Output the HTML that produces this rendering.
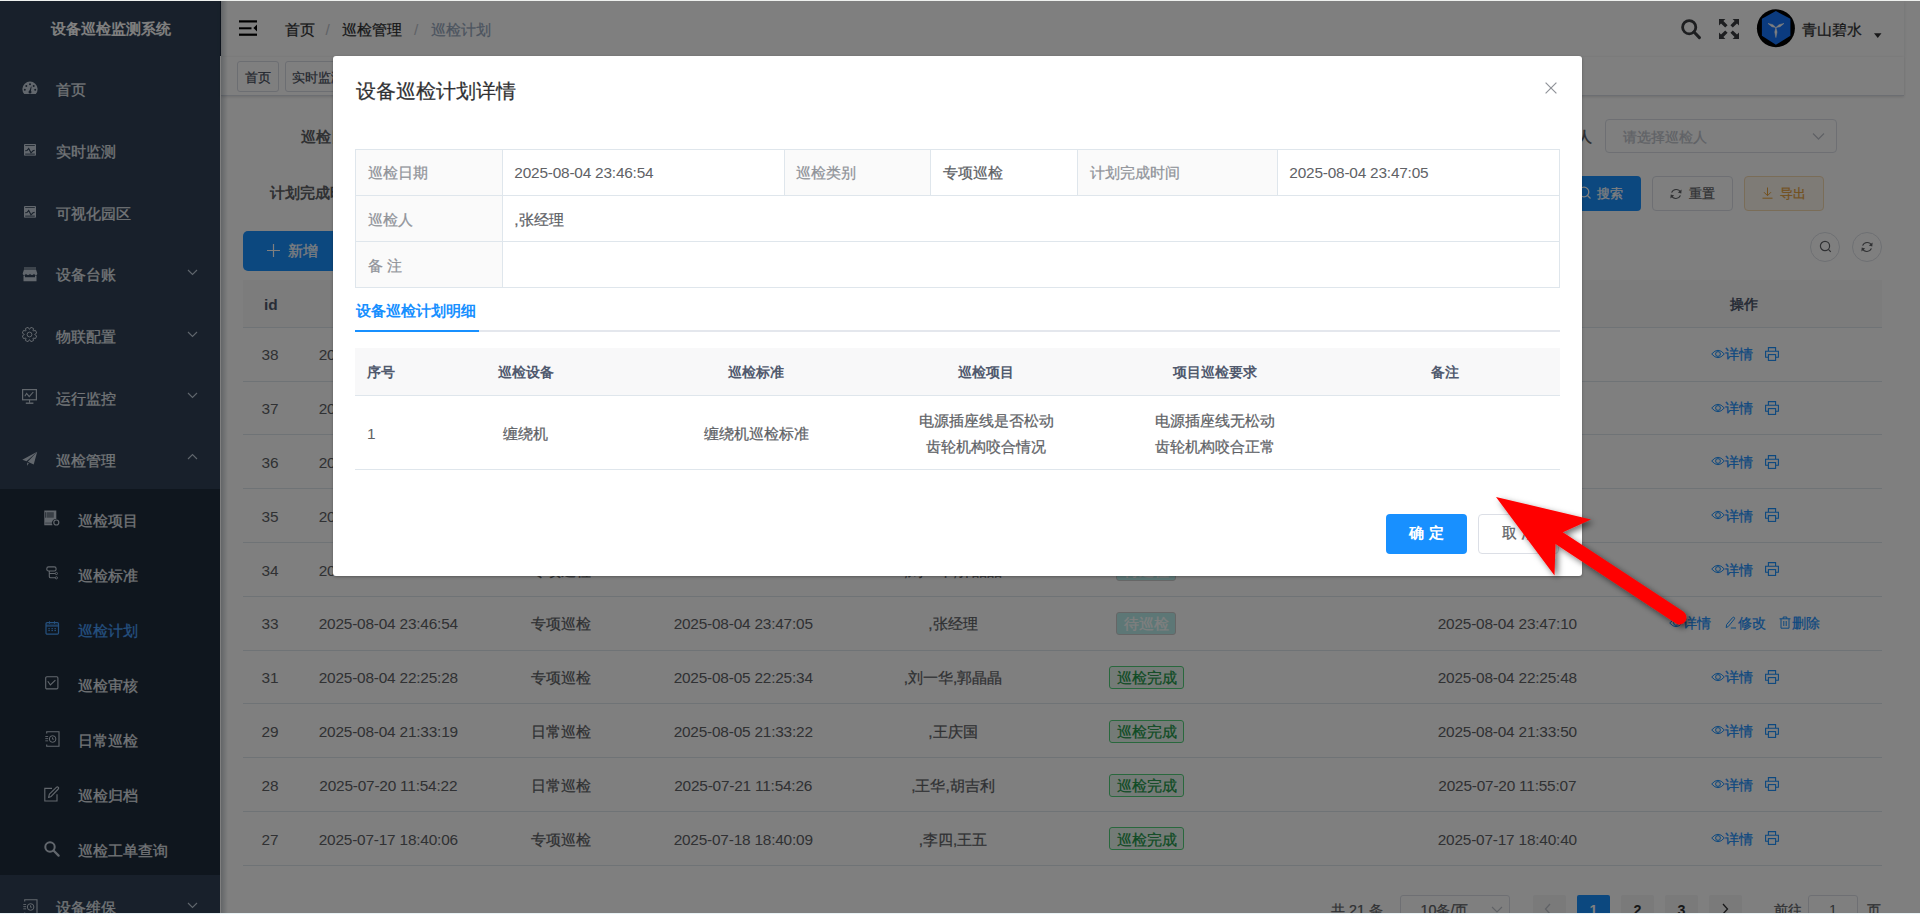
<!DOCTYPE html>
<html><head><meta charset="utf-8"><style>
*{box-sizing:border-box;margin:0;padding:0}
html,body{width:1920px;height:914px;overflow:hidden;background:#fff}
body{position:relative;font-family:"Liberation Sans",sans-serif;color:#606266;font-size:15.4px}
.a{position:absolute;white-space:nowrap}
</style></head><body>
<div class="a" style="left:0px;top:1px;width:221px;height:912px;background:#304156"></div>
<div class="a" style="left:220px;top:1px;width:1px;height:55px;background:#1a2638"></div>
<div class="a" style="left:0px;top:488.5px;width:220px;height:386.5px;background:#1f2d3d"></div>
<div class="a" style="left:0.50px;width:220px;text-align:center;top:17.25px;font-size:15.4px;line-height:24px;color:#fff;font-weight:bold;">设备巡检监测系统</div>
<div class="a " style="left:55.50px;top:77.95px;font-size:15.4px;line-height:24px;color:#e6ebf0;font-weight:normal;-webkit-text-stroke:0.25px currentColor;">首页</div>
<div class="a " style="left:55.50px;top:139.78px;font-size:15.4px;line-height:24px;color:#e6ebf0;font-weight:normal;-webkit-text-stroke:0.25px currentColor;">实时监测</div>
<div class="a " style="left:55.50px;top:201.61px;font-size:15.4px;line-height:24px;color:#e6ebf0;font-weight:normal;-webkit-text-stroke:0.25px currentColor;">可视化园区</div>
<div class="a " style="left:55.50px;top:263.44px;font-size:15.4px;line-height:24px;color:#e6ebf0;font-weight:normal;-webkit-text-stroke:0.25px currentColor;">设备台账</div>
<div class="a " style="left:55.50px;top:325.27px;font-size:15.4px;line-height:24px;color:#e6ebf0;font-weight:normal;-webkit-text-stroke:0.25px currentColor;">物联配置</div>
<div class="a " style="left:55.50px;top:387.10px;font-size:15.4px;line-height:24px;color:#e6ebf0;font-weight:normal;-webkit-text-stroke:0.25px currentColor;">运行监控</div>
<div class="a " style="left:55.50px;top:448.93px;font-size:15.4px;line-height:24px;color:#e6ebf0;font-weight:normal;-webkit-text-stroke:0.25px currentColor;">巡检管理</div>
<svg class="a" style="left:186.5px;top:268.69px;" width="11" height="7" viewBox="0 0 11 7"><polyline points="1,1 5.5,5.5 10,1" fill="none" stroke="#bfcbd9" stroke-width="1.1"/></svg>
<svg class="a" style="left:186.5px;top:330.52px;" width="11" height="7" viewBox="0 0 11 7"><polyline points="1,1 5.5,5.5 10,1" fill="none" stroke="#bfcbd9" stroke-width="1.1"/></svg>
<svg class="a" style="left:186.5px;top:392.34999999999997px;" width="11" height="7" viewBox="0 0 11 7"><polyline points="1,1 5.5,5.5 10,1" fill="none" stroke="#bfcbd9" stroke-width="1.1"/></svg>
<svg class="a" style="left:186.5px;top:453.18px;" width="11" height="7" viewBox="0 0 11 7"><polyline points="1,6 5.5,1.5 10,6" fill="none" stroke="#bfcbd9" stroke-width="1.1"/></svg>
<div class="a " style="left:55.50px;top:896.25px;font-size:15.4px;line-height:24px;color:#e6ebf0;font-weight:normal;-webkit-text-stroke:0.25px currentColor;">设备维保</div>
<svg class="a" style="left:186.5px;top:902px;" width="11" height="7" viewBox="0 0 11 7"><polyline points="1,1 5.5,5.5 10,1" fill="none" stroke="#bfcbd9" stroke-width="1.1"/></svg>
<div class="a " style="left:77.50px;top:508.65px;font-size:15.4px;line-height:24px;color:#e6ebf0;font-weight:normal;-webkit-text-stroke:0.25px currentColor;">巡检项目</div>
<div class="a " style="left:77.50px;top:563.65px;font-size:15.4px;line-height:24px;color:#e6ebf0;font-weight:normal;-webkit-text-stroke:0.25px currentColor;">巡检标准</div>
<div class="a " style="left:77.50px;top:618.65px;font-size:15.4px;line-height:24px;color:#4ba3ff;font-weight:normal;-webkit-text-stroke:0.25px currentColor;">巡检计划</div>
<div class="a " style="left:77.50px;top:673.65px;font-size:15.4px;line-height:24px;color:#e6ebf0;font-weight:normal;-webkit-text-stroke:0.25px currentColor;">巡检审核</div>
<div class="a " style="left:77.50px;top:728.65px;font-size:15.4px;line-height:24px;color:#e6ebf0;font-weight:normal;-webkit-text-stroke:0.25px currentColor;">日常巡检</div>
<div class="a " style="left:77.50px;top:783.65px;font-size:15.4px;line-height:24px;color:#e6ebf0;font-weight:normal;-webkit-text-stroke:0.25px currentColor;">巡检归档</div>
<div class="a " style="left:77.50px;top:838.65px;font-size:15.4px;line-height:24px;color:#e6ebf0;font-weight:normal;-webkit-text-stroke:0.25px currentColor;">巡检工单查询</div>
<svg class="a" style="left:22px;top:81px;" width="16" height="14" viewBox="0 0 16 14"><path d="M2.2,13.1 A7.6,7.6 0 1 1 13.8,13.1 Z" fill="#c5cfdb"/><circle cx="8" cy="3.3" r="1" fill="#304156"/><circle cx="4.3" cy="5" r="1" fill="#304156"/><circle cx="11.7" cy="5" r="1" fill="#304156"/><circle cx="2.8" cy="8.8" r="1" fill="#304156"/><circle cx="13.2" cy="8.8" r="1" fill="#304156"/><path d="M7.2,10.5 L9,5.5 L9.6,5.7 L8.8,10.8 Z" fill="#304156"/><circle cx="8" cy="11" r="1.5" fill="#304156"/></svg>
<svg class="a" style="left:24px;top:144px;" width="12" height="12" viewBox="0 0 12 12"><rect x="0" y="0" width="12" height="11.7" rx="1" fill="#c5cfdb"/><rect x="1.2" y="1.2" width="9.6" height="0.8" fill="#304156"/><polyline points="1.2,6.8 3,6.6 4.7,4.5 7,8.8 9,6.8 10.6,6.4" fill="none" stroke="#304156" stroke-width="1.1"/><rect x="1.2" y="9.3" width="9.6" height="2" fill="#304156" opacity=".55"/></svg>
<svg class="a" style="left:24px;top:206px;" width="12" height="12" viewBox="0 0 12 12"><rect x="0" y="0" width="12" height="11.7" rx="1" fill="#c5cfdb"/><rect x="1.2" y="1.2" width="9.6" height="0.8" fill="#304156"/><polyline points="1.2,6.8 3,6.6 4.7,4.5 7,8.8 9,6.8 10.6,6.4" fill="none" stroke="#304156" stroke-width="1.1"/><rect x="1.2" y="9.3" width="9.6" height="2" fill="#304156" opacity=".55"/></svg>
<svg class="a" style="left:22px;top:266.5px;" width="16" height="15" viewBox="0 0 16 15"><rect x="2" y="0.5" width="12" height="1" fill="#c5cfdb"/><path d="M2,2.5 H14 L15.3,6.5 Q15.3,8 14,8 Q12.5,8 12,6.8 Q11.3,8 10,8 Q8.6,8 8,6.8 Q7.4,8 6,8 Q4.7,8 4,6.8 Q3.4,8 2,8 Q0.7,8 0.7,6.5 Z" fill="#c5cfdb"/><path d="M1.5,8.5 H3 V10.2 H13 V8.5 H14.5 V14.2 H1.5 Z" fill="#c5cfdb"/></svg>
<svg class="a" style="left:22px;top:327px;" width="15" height="15" viewBox="0 0 15 15"><polygon points="14.66,8.90 13.55,11.58 11.30,11.05 11.05,11.30 11.58,13.55 8.90,14.66 7.67,12.70 7.33,12.70 6.10,14.66 3.42,13.55 3.95,11.30 3.70,11.05 1.45,11.58 0.34,8.90 2.30,7.67 2.30,7.33 0.34,6.10 1.45,3.42 3.70,3.95 3.95,3.70 3.42,1.45 6.10,0.34 7.33,2.30 7.67,2.30 8.90,0.34 11.58,1.45 11.05,3.70 11.30,3.95 13.55,3.42 14.66,6.10 12.70,7.33 12.70,7.67" fill="none" stroke="#c5cfdb" stroke-width="1" stroke-linejoin="round"/><circle cx="7.5" cy="7.5" r="2.4" fill="none" stroke="#c5cfdb" stroke-width="1"/></svg>
<svg class="a" style="left:22px;top:388.5px;" width="15" height="16" viewBox="0 0 15 16"><rect x="0.6" y="0.6" width="13.8" height="10.2" fill="none" stroke="#c5cfdb" stroke-width="1.2"/><polyline points="2.8,7.2 4.6,4.5 7.2,7.7 11.3,3" fill="none" stroke="#c5cfdb" stroke-width="1.1"/><rect x="7" y="10.8" width="1.1" height="3" fill="#c5cfdb"/><rect x="3.8" y="13.5" width="7.6" height="1.4" fill="#c5cfdb"/></svg>
<svg class="a" style="left:22px;top:450.5px;" width="16" height="16" viewBox="0 0 16 16"><path d="M15.2,0.8 L0.3,8.7 L4.5,10.3 Z" fill="#c5cfdb"/><path d="M15.2,0.8 L5.8,10.7 L11.7,13.5 Z" fill="#c5cfdb"/><path d="M5.2,11.5 L6.8,12.3 L5.1,14.7 Z" fill="#c5cfdb"/></svg>
<svg class="a" style="left:23px;top:898.5px;" width="15" height="16" viewBox="0 0 15 16"><path d="M1.7,2.5 V0.7 H14 V15.3 H1.7 V13.5" fill="none" stroke="#c5cfdb" stroke-width="1.1"/><rect x="0.3" y="5" width="2.8" height="0.9" fill="#c5cfdb"/><rect x="0.3" y="7.2" width="2.8" height="0.9" fill="#c5cfdb"/><rect x="0.3" y="9.4" width="2.8" height="0.9" fill="#c5cfdb"/><circle cx="7.6" cy="8" r="3.3" fill="none" stroke="#c5cfdb" stroke-width="1"/><path d="M7.5,6.3 V8.2 H8.9" fill="none" stroke="#c5cfdb" stroke-width=".9"/></svg>
<svg class="a" style="left:44px;top:509.5px;" width="16" height="16" viewBox="0 0 16 16"><path d="M0.3,0.4 H12.3 V9 A4,4 0 0 0 8.5,15.2 H0.3 Z" fill="#c5cfdb"/><rect x="2.9" y="2.2" width="6.9" height="5.5" fill="#1f2d3d" opacity=".5"/><rect x="1.4" y="2.2" width="0.8" height="5.5" fill="#1f2d3d"/><rect x="1.2" y="12.5" width="7" height="1.2" fill="#1f2d3d" opacity=".4"/><circle cx="12.3" cy="12.5" r="2.5" fill="none" stroke="#c5cfdb" stroke-width="1.2"/></svg>
<svg class="a" style="left:46px;top:565.5px;" width="12" height="14" viewBox="0 0 12 14"><rect x="0.8" y="0.9" width="9.3" height="4.1" rx="1.8" fill="none" stroke="#c5cfdb" stroke-width="1.1"/><path d="M3.3,5 V10.5 Q3.3,11.8 4.6,11.8 H9.3 M3.3,7.5 H9.3" fill="none" stroke="#c5cfdb" stroke-width="1.1"/><circle cx="10.4" cy="7.5" r="1.1" fill="none" stroke="#c5cfdb" stroke-width=".9"/><circle cx="10.4" cy="11.8" r="1.1" fill="none" stroke="#c5cfdb" stroke-width=".9"/></svg>
<svg class="a" style="left:44.5px;top:621px;" width="15" height="14" viewBox="0 0 15 14"><rect x="1" y="1.6" width="12.5" height="11.5" rx="1.2" fill="none" stroke="#4ba3ff" stroke-width="1.2"/><rect x="1" y="3.5" width="12.5" height="2.3" fill="#4ba3ff" opacity=".7"/><rect x="4" y="0.3" width="1" height="2.5" fill="#4ba3ff"/><rect x="9" y="0.3" width="1" height="2.5" fill="#4ba3ff"/><g fill="#4ba3ff"><rect x="3.3" y="7.2" width="1.6" height="1"/><rect x="6.4" y="7.2" width="1.6" height="1"/><rect x="9.4" y="7.2" width="1.6" height="1"/><rect x="3.3" y="9.1" width="1.6" height="1"/><rect x="6.4" y="9.1" width="1.6" height="1"/><rect x="9.4" y="9.1" width="1.6" height="1"/></g></svg>
<svg class="a" style="left:45px;top:676px;" width="14" height="14" viewBox="0 0 14 14"><rect x="0.7" y="0.7" width="12.2" height="12.2" rx="1.2" fill="none" stroke="#c5cfdb" stroke-width="1.1"/><polyline points="2.8,5.3 5.4,9 10.4,4.2" fill="none" stroke="#c5cfdb" stroke-width="1.1"/></svg>
<svg class="a" style="left:44.5px;top:730.5px;" width="15" height="16" viewBox="0 0 15 16"><path d="M1.7,2.5 V0.7 H14 V15.3 H1.7 V13.5" fill="none" stroke="#c5cfdb" stroke-width="1.1"/><rect x="0.3" y="5" width="2.8" height="0.9" fill="#c5cfdb"/><rect x="0.3" y="7.2" width="2.8" height="0.9" fill="#c5cfdb"/><rect x="0.3" y="9.4" width="2.8" height="0.9" fill="#c5cfdb"/><circle cx="7.6" cy="8" r="3.3" fill="none" stroke="#c5cfdb" stroke-width="1"/><path d="M7.5,6.3 V8.2 H8.9" fill="none" stroke="#c5cfdb" stroke-width=".9"/></svg>
<svg class="a" style="left:44px;top:785.5px;" width="16" height="16" viewBox="0 0 16 16"><path d="M8,2.4 H0.8 V15 H13 V8.3" fill="none" stroke="#c5cfdb" stroke-width="1.1"/><path d="M4.6,11.5 L5.4,8.2 L12.6,1.2 Q13.4,0.5 14.3,1.3 Q15,2.2 14.3,3 L7.2,10.4 Z" fill="none" stroke="#c5cfdb" stroke-width="1.1" stroke-linejoin="round"/></svg>
<svg class="a" style="left:44px;top:840.5px;" width="16" height="16" viewBox="0 0 16 16"><circle cx="6" cy="6" r="4.7" fill="none" stroke="#c5cfdb" stroke-width="2"/><line x1="9.5" y1="9.5" x2="14.6" y2="14.6" stroke="#c5cfdb" stroke-width="2.2" stroke-linecap="round"/></svg>
<div class="a" style="left:221px;top:1px;width:1683px;height:56px;background:#fff;box-shadow:0 1px 4px rgba(0,21,41,.12)"></div>
<svg class="a" style="left:239px;top:20px;" width="18" height="16" viewBox="0 0 18 16"><rect x="0" y="0.3" width="18" height="2.2" fill="#000"/><rect x="0" y="7.3" width="12.5" height="2" fill="#000"/><rect x="0" y="13.6" width="18" height="2.2" fill="#000"/><path d="M18,4.4 V11.6 L14.4,8 Z" fill="#000"/></svg>
<div class="a " style="left:285.00px;top:17.75px;font-size:15.4px;line-height:24px;color:#303133;font-weight:normal;-webkit-text-stroke:0.25px currentColor;">首页</div>
<div class="a " style="left:325.50px;top:17.75px;font-size:15.4px;line-height:24px;color:#c0c4cc;font-weight:normal;">/</div>
<div class="a " style="left:342.00px;top:17.75px;font-size:15.4px;line-height:24px;color:#303133;font-weight:normal;-webkit-text-stroke:0.25px currentColor;">巡检管理</div>
<div class="a " style="left:414.00px;top:17.75px;font-size:15.4px;line-height:24px;color:#c0c4cc;font-weight:normal;">/</div>
<div class="a " style="left:430.50px;top:17.75px;font-size:15.4px;line-height:24px;color:#97a8be;font-weight:normal;-webkit-text-stroke:0.25px currentColor;">巡检计划</div>
<svg class="a" style="left:1681px;top:19px;" width="20" height="21" viewBox="0 0 20 21"><circle cx="8.2" cy="8.2" r="6.6" fill="none" stroke="#3a3c40" stroke-width="2.8"/><line x1="13" y1="13" x2="18.4" y2="18.6" stroke="#3a3c40" stroke-width="3" stroke-linecap="round"/></svg>
<svg class="a" style="left:1719px;top:19px;" width="20" height="20" viewBox="0 0 20 20"><g fill="#3a3c40"><path d="M0,0 H6.4 L4.4,2 L8.6,6.2 L6.2,8.6 L2,4.4 L0,6.4 Z"/><path d="M0,0 H6.4 L4.4,2 L8.6,6.2 L6.2,8.6 L2,4.4 L0,6.4 Z" transform="translate(20,0) scale(-1,1)"/><path d="M0,0 H6.4 L4.4,2 L8.6,6.2 L6.2,8.6 L2,4.4 L0,6.4 Z" transform="translate(0,20) scale(1,-1)"/><path d="M0,0 H6.4 L4.4,2 L8.6,6.2 L6.2,8.6 L2,4.4 L0,6.4 Z" transform="translate(20,20) scale(-1,-1)"/></g></svg>
<svg class="a" style="left:1756px;top:9px;" width="40" height="40" viewBox="0 0 40 40"><circle cx="19.9" cy="19.3" r="19" fill="#000"/><polygon points="19.9,2 34.4,9.8 34.4,26.8 19.9,35.8 5.9,26.8 5.9,9.8" fill="#1676ff"/><polygon points="19.90,18.60 16.88,15.69 12.00,14.40 15.81,17.73" fill="#fff" stroke="#fff" stroke-width=".5" stroke-linejoin="round"/><polygon points="19.90,18.60 24.07,17.73 28.00,14.40 23.02,15.69" fill="#fff" stroke="#fff" stroke-width=".5" stroke-linejoin="round"/><polygon points="19.90,18.60 18.75,23.10 19.90,28.60 21.05,23.10" fill="#fff" stroke="#fff" stroke-width=".5" stroke-linejoin="round"/></svg>
<div class="a " style="left:1801.50px;top:17.75px;font-size:15.4px;line-height:24px;color:#303133;font-weight:normal;-webkit-text-stroke:0.25px currentColor;">青山碧水</div>
<svg class="a" style="left:1874px;top:33px;" width="8" height="6" viewBox="0 0 8 6"><polygon points="0,0.3 7.5,0.3 3.75,5" fill="#303133"/></svg>
<div class="a" style="left:221px;top:57px;width:1683px;height:38.5px;background:#fff;border-bottom:1px solid #d8dce5;box-shadow:0 1px 3px 0 rgba(0,0,0,.12),0 0 3px 0 rgba(0,0,0,.04)"></div>
<div class="a" style="left:237px;top:61px;width:42px;height:30.5px;border:1px solid #d8dce5;border-radius:3px;background:#fff"></div>
<div class="a " style="left:245.00px;top:65.75px;font-size:13.2px;line-height:24px;color:#495060;font-weight:normal;-webkit-text-stroke:0.25px currentColor;">首页</div>
<div class="a" style="left:284.5px;top:61px;width:80px;height:30.5px;border:1px solid #d8dce5;border-radius:3px;background:#fff"></div>
<div class="a " style="left:292.00px;top:65.75px;font-size:13.2px;line-height:24px;color:#495060;font-weight:normal;-webkit-text-stroke:0.25px currentColor;">实时监测</div>
<div class="a " style="left:301.00px;top:124.75px;font-size:15.4px;line-height:24px;color:#606266;font-weight:bold;">巡检日期</div>
<div class="a " style="left:270.00px;top:181.25px;font-size:15.4px;line-height:24px;color:#606266;font-weight:bold;">计划完成时间</div>
<div class="a " style="left:1547.00px;top:124.75px;font-size:15.4px;line-height:24px;color:#606266;font-weight:bold;">巡检人</div>
<div class="a" style="left:1605px;top:119px;width:232px;height:34px;border:1px solid #dcdfe6;border-radius:4px;background:#fff"></div>
<div class="a " style="left:1622.50px;top:124.75px;font-size:14.3px;line-height:24px;color:#c0c4cc;font-weight:normal;-webkit-text-stroke:0.25px currentColor;">请选择巡检人</div>
<svg class="a" style="left:1811.5px;top:131.5px;" width="14" height="9" viewBox="0 0 14 9"><polyline points="1,1.5 6.5,7 12,1.5" fill="none" stroke="#c0c4cc" stroke-width="1.3"/></svg>
<div class="a" style="left:1540px;top:176px;width:100.5px;height:34.5px;background:#1890ff;border-radius:4px"></div>
<div class="a " style="left:1596.50px;top:182.25px;font-size:13.2px;line-height:24px;color:#fff;font-weight:normal;-webkit-text-stroke:0.25px currentColor;">搜索</div>
<svg class="a" style="left:1578px;top:186px;" width="14" height="14" viewBox="0 0 14 14"><circle cx="6" cy="6" r="4.8" fill="none" stroke="#fff" stroke-width="1.3"/><line x1="9.5" y1="9.5" x2="12.5" y2="12.5" stroke="#fff" stroke-width="1.3"/></svg>
<div class="a" style="left:1652px;top:176px;width:80.5px;height:34.5px;border:1px solid #dcdfe6;border-radius:4px;background:#fff"></div>
<div class="a " style="left:1688.50px;top:182.25px;font-size:13.2px;line-height:24px;color:#606266;font-weight:normal;-webkit-text-stroke:0.25px currentColor;">重置</div>
<svg class="a" style="left:1670px;top:187.5px;" width="12" height="12" viewBox="0 0 12 12"><path d="M10.6,4.2 A5,5 0 0 0 1.6,4.6" fill="none" stroke="#606266" stroke-width="1.1"/><path d="M1.4,7.8 A5,5 0 0 0 10.4,7.4" fill="none" stroke="#606266" stroke-width="1.1"/><path d="M11.6,1.6 L11.3,5.4 L7.8,4.6 Z" fill="#606266"/><path d="M0.4,10.4 L0.7,6.6 L4.2,7.4 Z" fill="#606266"/></svg>
<div class="a" style="left:1744px;top:176px;width:80px;height:34.5px;border:1px solid #f5dab1;border-radius:4px;background:#fdf6ec"></div>
<div class="a " style="left:1779.50px;top:182.25px;font-size:13.2px;line-height:24px;color:#e6a23c;font-weight:normal;-webkit-text-stroke:0.25px currentColor;">导出</div>
<svg class="a" style="left:1762px;top:187px;" width="11" height="12" viewBox="0 0 11 12"><path d="M5.5,0.5 V8.5 M2,5.2 L5.5,8.7 L9,5.2 M0.5,11.2 H10.5" fill="none" stroke="#e6a23c" stroke-width="1"/></svg>
<div class="a" style="left:243px;top:231px;width:120px;height:40px;background:#1890ff;border-radius:5px"></div>
<svg class="a" style="left:267px;top:244px;" width="13" height="13" viewBox="0 0 13 13"><path d="M6.5,0 V13 M0,6.5 H13" stroke="#fff" stroke-width="1.2"/></svg>
<div class="a " style="left:287.50px;top:239.25px;font-size:15.4px;line-height:24px;color:#fff;font-weight:normal;-webkit-text-stroke:0.25px currentColor;">新增</div>
<div class="a" style="left:1810.2px;top:231.7px;width:30px;height:30px;border:1px solid #dcdfe6;border-radius:50%;background:#fff"></div>
<div class="a" style="left:1852px;top:231.7px;width:30px;height:30px;border:1px solid #dcdfe6;border-radius:50%;background:#fff"></div>
<svg class="a" style="left:1818.5px;top:240.2px;" width="14" height="14" viewBox="0 0 14 14"><circle cx="6" cy="6" r="4.6" fill="none" stroke="#606266" stroke-width="1.2"/><line x1="9.4" y1="9.4" x2="11.8" y2="11.8" stroke="#606266" stroke-width="1.2"/></svg>
<svg class="a" style="left:1861px;top:240.5px;" width="12" height="12" viewBox="0 0 12 12"><path d="M10.6,4.2 A5,5 0 0 0 1.6,4.6" fill="none" stroke="#606266" stroke-width="1.1"/><path d="M1.4,7.8 A5,5 0 0 0 10.4,7.4" fill="none" stroke="#606266" stroke-width="1.1"/><path d="M11.6,1.6 L11.3,5.4 L7.8,4.6 Z" fill="#606266"/><path d="M0.4,10.4 L0.7,6.6 L4.2,7.4 Z" fill="#606266"/></svg>
<div class="a" style="left:243px;top:280px;width:1639px;height:48px;background:#f8f8f9;border-bottom:1px solid #dfe6ec"></div>
<div class="a " style="left:264.00px;top:292.75px;font-size:15.4px;line-height:24px;color:#515a6e;font-weight:bold;">id</div>
<div class="a" style="left:1644.40px;width:200px;text-align:center;top:292.25px;font-size:14.4px;line-height:24px;color:#515a6e;font-weight:bold;">操作</div>
<div class="a" style="left:243px;top:380.5px;width:1639px;height:1px;background:#dfe6ec"></div>
<div class="a " style="left:261.50px;top:343.45px;font-size:15.4px;line-height:24px;color:#606266;font-weight:normal;">38</div>
<div class="a" style="left:188.30px;width:400px;text-align:center;top:343.45px;font-size:15.4px;line-height:24px;color:#606266;font-weight:normal;letter-spacing:-0.2px;">2025-08-04 23:46:54</div>
<div class="a" style="left:361.20px;width:400px;text-align:center;top:343.45px;font-size:15.4px;line-height:24px;color:#606266;font-weight:normal;-webkit-text-stroke:0.25px currentColor;">专项巡检</div>
<div class="a" style="left:543.20px;width:400px;text-align:center;top:343.45px;font-size:15.4px;line-height:24px;color:#606266;font-weight:normal;letter-spacing:-0.2px;">2025-08-04 23:47:05</div>
<div class="a" style="left:753.00px;width:400px;text-align:center;top:343.45px;font-size:15.4px;line-height:24px;color:#606266;font-weight:normal;-webkit-text-stroke:0.25px currentColor;">,张经理</div>
<div class="a" style="left:1109px;top:343.2px;width:75px;height:23px;background:#e9f7ee;border:1px solid #52d07a;border-radius:3px"></div>
<div class="a" style="left:946.50px;width:400px;text-align:center;top:343.45px;font-size:15.4px;line-height:24px;color:#1a9646;font-weight:normal;-webkit-text-stroke:0.25px currentColor;">巡检完成</div>
<div class="a" style="left:1307.30px;width:400px;text-align:center;top:343.45px;font-size:15.4px;line-height:24px;color:#606266;font-weight:normal;letter-spacing:-0.2px;">2025-08-04 23:47:10</div>
<svg class="a" style="left:1710.5px;top:348.7px;" width="14" height="11" viewBox="0 0 14 11"><path d="M0.7,5 Q7,-2.4 13.3,5 Q7,12.4 0.7,5 Z" fill="none" stroke="#1890ff" stroke-width="1"/><circle cx="7" cy="5" r="2.4" fill="none" stroke="#1890ff" stroke-width="1"/></svg>
<div class="a " style="left:1725.00px;top:342.45px;font-size:14px;line-height:24px;color:#1890ff;font-weight:normal;-webkit-text-stroke:0.25px currentColor;">详情</div>
<svg class="a" style="left:1764.5px;top:346.9px;" width="14" height="14" viewBox="0 0 14 14"><path d="M3.4,4.2 V0.6 H10.6 V4.2 M3.4,10.3 H0.6 V4.2 H13.4 V10.3 H10.6" fill="none" stroke="#1890ff" stroke-width="1.1"/><rect x="3.4" y="7.6" width="7.2" height="5.8" fill="none" stroke="#1890ff" stroke-width="1.1"/></svg>
<div class="a" style="left:243px;top:434.3px;width:1639px;height:1px;background:#dfe6ec"></div>
<div class="a " style="left:261.50px;top:397.25px;font-size:15.4px;line-height:24px;color:#606266;font-weight:normal;">37</div>
<div class="a" style="left:188.30px;width:400px;text-align:center;top:397.25px;font-size:15.4px;line-height:24px;color:#606266;font-weight:normal;letter-spacing:-0.2px;">2025-08-04 23:46:54</div>
<div class="a" style="left:361.20px;width:400px;text-align:center;top:397.25px;font-size:15.4px;line-height:24px;color:#606266;font-weight:normal;-webkit-text-stroke:0.25px currentColor;">专项巡检</div>
<div class="a" style="left:543.20px;width:400px;text-align:center;top:397.25px;font-size:15.4px;line-height:24px;color:#606266;font-weight:normal;letter-spacing:-0.2px;">2025-08-04 23:47:05</div>
<div class="a" style="left:753.00px;width:400px;text-align:center;top:397.25px;font-size:15.4px;line-height:24px;color:#606266;font-weight:normal;-webkit-text-stroke:0.25px currentColor;">,张经理</div>
<div class="a" style="left:1109px;top:397.0px;width:75px;height:23px;background:#e9f7ee;border:1px solid #52d07a;border-radius:3px"></div>
<div class="a" style="left:946.50px;width:400px;text-align:center;top:397.25px;font-size:15.4px;line-height:24px;color:#1a9646;font-weight:normal;-webkit-text-stroke:0.25px currentColor;">巡检完成</div>
<div class="a" style="left:1307.30px;width:400px;text-align:center;top:397.25px;font-size:15.4px;line-height:24px;color:#606266;font-weight:normal;letter-spacing:-0.2px;">2025-08-04 23:47:10</div>
<svg class="a" style="left:1710.5px;top:402.5px;" width="14" height="11" viewBox="0 0 14 11"><path d="M0.7,5 Q7,-2.4 13.3,5 Q7,12.4 0.7,5 Z" fill="none" stroke="#1890ff" stroke-width="1"/><circle cx="7" cy="5" r="2.4" fill="none" stroke="#1890ff" stroke-width="1"/></svg>
<div class="a " style="left:1725.00px;top:396.25px;font-size:14px;line-height:24px;color:#1890ff;font-weight:normal;-webkit-text-stroke:0.25px currentColor;">详情</div>
<svg class="a" style="left:1764.5px;top:400.7px;" width="14" height="14" viewBox="0 0 14 14"><path d="M3.4,4.2 V0.6 H10.6 V4.2 M3.4,10.3 H0.6 V4.2 H13.4 V10.3 H10.6" fill="none" stroke="#1890ff" stroke-width="1.1"/><rect x="3.4" y="7.6" width="7.2" height="5.8" fill="none" stroke="#1890ff" stroke-width="1.1"/></svg>
<div class="a" style="left:243px;top:488.09999999999997px;width:1639px;height:1px;background:#dfe6ec"></div>
<div class="a " style="left:261.50px;top:451.05px;font-size:15.4px;line-height:24px;color:#606266;font-weight:normal;">36</div>
<div class="a" style="left:188.30px;width:400px;text-align:center;top:451.05px;font-size:15.4px;line-height:24px;color:#606266;font-weight:normal;letter-spacing:-0.2px;">2025-08-04 23:46:54</div>
<div class="a" style="left:361.20px;width:400px;text-align:center;top:451.05px;font-size:15.4px;line-height:24px;color:#606266;font-weight:normal;-webkit-text-stroke:0.25px currentColor;">专项巡检</div>
<div class="a" style="left:543.20px;width:400px;text-align:center;top:451.05px;font-size:15.4px;line-height:24px;color:#606266;font-weight:normal;letter-spacing:-0.2px;">2025-08-04 23:47:05</div>
<div class="a" style="left:753.00px;width:400px;text-align:center;top:451.05px;font-size:15.4px;line-height:24px;color:#606266;font-weight:normal;-webkit-text-stroke:0.25px currentColor;">,张经理</div>
<div class="a" style="left:1109px;top:450.79999999999995px;width:75px;height:23px;background:#e9f7ee;border:1px solid #52d07a;border-radius:3px"></div>
<div class="a" style="left:946.50px;width:400px;text-align:center;top:451.05px;font-size:15.4px;line-height:24px;color:#1a9646;font-weight:normal;-webkit-text-stroke:0.25px currentColor;">巡检完成</div>
<div class="a" style="left:1307.30px;width:400px;text-align:center;top:451.05px;font-size:15.4px;line-height:24px;color:#606266;font-weight:normal;letter-spacing:-0.2px;">2025-08-04 23:47:10</div>
<svg class="a" style="left:1710.5px;top:456.29999999999995px;" width="14" height="11" viewBox="0 0 14 11"><path d="M0.7,5 Q7,-2.4 13.3,5 Q7,12.4 0.7,5 Z" fill="none" stroke="#1890ff" stroke-width="1"/><circle cx="7" cy="5" r="2.4" fill="none" stroke="#1890ff" stroke-width="1"/></svg>
<div class="a " style="left:1725.00px;top:450.05px;font-size:14px;line-height:24px;color:#1890ff;font-weight:normal;-webkit-text-stroke:0.25px currentColor;">详情</div>
<svg class="a" style="left:1764.5px;top:454.49999999999994px;" width="14" height="14" viewBox="0 0 14 14"><path d="M3.4,4.2 V0.6 H10.6 V4.2 M3.4,10.3 H0.6 V4.2 H13.4 V10.3 H10.6" fill="none" stroke="#1890ff" stroke-width="1.1"/><rect x="3.4" y="7.6" width="7.2" height="5.8" fill="none" stroke="#1890ff" stroke-width="1.1"/></svg>
<div class="a" style="left:243px;top:541.9px;width:1639px;height:1px;background:#dfe6ec"></div>
<div class="a " style="left:261.50px;top:504.85px;font-size:15.4px;line-height:24px;color:#606266;font-weight:normal;">35</div>
<div class="a" style="left:188.30px;width:400px;text-align:center;top:504.85px;font-size:15.4px;line-height:24px;color:#606266;font-weight:normal;letter-spacing:-0.2px;">2025-08-04 23:46:54</div>
<div class="a" style="left:361.20px;width:400px;text-align:center;top:504.85px;font-size:15.4px;line-height:24px;color:#606266;font-weight:normal;-webkit-text-stroke:0.25px currentColor;">专项巡检</div>
<div class="a" style="left:543.20px;width:400px;text-align:center;top:504.85px;font-size:15.4px;line-height:24px;color:#606266;font-weight:normal;letter-spacing:-0.2px;">2025-08-04 23:47:05</div>
<div class="a" style="left:753.00px;width:400px;text-align:center;top:504.85px;font-size:15.4px;line-height:24px;color:#606266;font-weight:normal;-webkit-text-stroke:0.25px currentColor;">,张经理</div>
<div class="a" style="left:1109px;top:504.5999999999999px;width:75px;height:23px;background:#e9f7ee;border:1px solid #52d07a;border-radius:3px"></div>
<div class="a" style="left:946.50px;width:400px;text-align:center;top:504.85px;font-size:15.4px;line-height:24px;color:#1a9646;font-weight:normal;-webkit-text-stroke:0.25px currentColor;">巡检完成</div>
<div class="a" style="left:1307.30px;width:400px;text-align:center;top:504.85px;font-size:15.4px;line-height:24px;color:#606266;font-weight:normal;letter-spacing:-0.2px;">2025-08-04 23:47:10</div>
<svg class="a" style="left:1710.5px;top:510.0999999999999px;" width="14" height="11" viewBox="0 0 14 11"><path d="M0.7,5 Q7,-2.4 13.3,5 Q7,12.4 0.7,5 Z" fill="none" stroke="#1890ff" stroke-width="1"/><circle cx="7" cy="5" r="2.4" fill="none" stroke="#1890ff" stroke-width="1"/></svg>
<div class="a " style="left:1725.00px;top:503.85px;font-size:14px;line-height:24px;color:#1890ff;font-weight:normal;-webkit-text-stroke:0.25px currentColor;">详情</div>
<svg class="a" style="left:1764.5px;top:508.2999999999999px;" width="14" height="14" viewBox="0 0 14 14"><path d="M3.4,4.2 V0.6 H10.6 V4.2 M3.4,10.3 H0.6 V4.2 H13.4 V10.3 H10.6" fill="none" stroke="#1890ff" stroke-width="1.1"/><rect x="3.4" y="7.6" width="7.2" height="5.8" fill="none" stroke="#1890ff" stroke-width="1.1"/></svg>
<div class="a" style="left:243px;top:595.6999999999999px;width:1639px;height:1px;background:#dfe6ec"></div>
<div class="a " style="left:261.50px;top:558.65px;font-size:15.4px;line-height:24px;color:#606266;font-weight:normal;">34</div>
<div class="a" style="left:188.30px;width:400px;text-align:center;top:558.65px;font-size:15.4px;line-height:24px;color:#606266;font-weight:normal;letter-spacing:-0.2px;">2025-08-04 23:46:54</div>
<div class="a" style="left:361.20px;width:400px;text-align:center;top:558.65px;font-size:15.4px;line-height:24px;color:#606266;font-weight:normal;-webkit-text-stroke:0.25px currentColor;">专项巡检</div>
<div class="a" style="left:543.20px;width:400px;text-align:center;top:558.65px;font-size:15.4px;line-height:24px;color:#606266;font-weight:normal;letter-spacing:-0.2px;">2025-08-04 23:47:05</div>
<div class="a" style="left:753.00px;width:400px;text-align:center;top:558.65px;font-size:15.4px;line-height:24px;color:#606266;font-weight:normal;-webkit-text-stroke:0.25px currentColor;">,刘一华,郭晶晶</div>
<div class="a" style="left:1116.3px;top:558.6px;width:59.3px;height:22.5px;background:#bbefed;border:1px solid #cdcdcd;border-radius:3px"></div>
<div class="a" style="left:946.00px;width:400px;text-align:center;top:558.65px;font-size:15.4px;line-height:24px;color:#ffffff;font-weight:normal;-webkit-text-stroke:0.25px currentColor;">待巡检</div>
<div class="a" style="left:1307.30px;width:400px;text-align:center;top:558.65px;font-size:15.4px;line-height:24px;color:#606266;font-weight:normal;letter-spacing:-0.2px;">2025-08-04 23:47:10</div>
<svg class="a" style="left:1710.5px;top:563.9px;" width="14" height="11" viewBox="0 0 14 11"><path d="M0.7,5 Q7,-2.4 13.3,5 Q7,12.4 0.7,5 Z" fill="none" stroke="#1890ff" stroke-width="1"/><circle cx="7" cy="5" r="2.4" fill="none" stroke="#1890ff" stroke-width="1"/></svg>
<div class="a " style="left:1725.00px;top:557.65px;font-size:14px;line-height:24px;color:#1890ff;font-weight:normal;-webkit-text-stroke:0.25px currentColor;">详情</div>
<svg class="a" style="left:1764.5px;top:562.1px;" width="14" height="14" viewBox="0 0 14 14"><path d="M3.4,4.2 V0.6 H10.6 V4.2 M3.4,10.3 H0.6 V4.2 H13.4 V10.3 H10.6" fill="none" stroke="#1890ff" stroke-width="1.1"/><rect x="3.4" y="7.6" width="7.2" height="5.8" fill="none" stroke="#1890ff" stroke-width="1.1"/></svg>
<div class="a" style="left:243px;top:649.5px;width:1639px;height:1px;background:#dfe6ec"></div>
<div class="a " style="left:261.50px;top:612.45px;font-size:15.4px;line-height:24px;color:#606266;font-weight:normal;">33</div>
<div class="a" style="left:188.30px;width:400px;text-align:center;top:612.45px;font-size:15.4px;line-height:24px;color:#606266;font-weight:normal;letter-spacing:-0.2px;">2025-08-04 23:46:54</div>
<div class="a" style="left:361.20px;width:400px;text-align:center;top:612.45px;font-size:15.4px;line-height:24px;color:#606266;font-weight:normal;-webkit-text-stroke:0.25px currentColor;">专项巡检</div>
<div class="a" style="left:543.20px;width:400px;text-align:center;top:612.45px;font-size:15.4px;line-height:24px;color:#606266;font-weight:normal;letter-spacing:-0.2px;">2025-08-04 23:47:05</div>
<div class="a" style="left:753.00px;width:400px;text-align:center;top:612.45px;font-size:15.4px;line-height:24px;color:#606266;font-weight:normal;-webkit-text-stroke:0.25px currentColor;">,张经理</div>
<div class="a" style="left:1116.3px;top:612.4000000000001px;width:59.3px;height:22.5px;background:#bbefed;border:1px solid #cdcdcd;border-radius:3px"></div>
<div class="a" style="left:946.00px;width:400px;text-align:center;top:612.45px;font-size:15.4px;line-height:24px;color:#ffffff;font-weight:normal;-webkit-text-stroke:0.25px currentColor;">待巡检</div>
<div class="a" style="left:1307.30px;width:400px;text-align:center;top:612.45px;font-size:15.4px;line-height:24px;color:#606266;font-weight:normal;letter-spacing:-0.2px;">2025-08-04 23:47:10</div>
<svg class="a" style="left:1668.5px;top:617.7px;" width="14" height="11" viewBox="0 0 14 11"><path d="M0.7,5 Q7,-2.4 13.3,5 Q7,12.4 0.7,5 Z" fill="none" stroke="#1890ff" stroke-width="1"/><circle cx="7" cy="5" r="2.4" fill="none" stroke="#1890ff" stroke-width="1"/></svg>
<div class="a " style="left:1683.00px;top:611.45px;font-size:14px;line-height:24px;color:#1890ff;font-weight:normal;-webkit-text-stroke:0.25px currentColor;">详情</div>
<svg class="a" style="left:1725px;top:616.2px;" width="12" height="13" viewBox="0 0 12 13"><path d="M1.2,11.6 L1.6,8.6 L7.6,1.6 Q8.4,0.8 9.3,1.5 Q10,2.3 9.3,3.1 L3.4,10.4 Z M5.8,12 H11" fill="none" stroke="#1890ff" stroke-width="1"/></svg>
<div class="a " style="left:1737.50px;top:611.45px;font-size:14px;line-height:24px;color:#1890ff;font-weight:normal;-webkit-text-stroke:0.25px currentColor;">修改</div>
<svg class="a" style="left:1779px;top:616.2px;" width="12" height="13" viewBox="0 0 12 13"><path d="M0.5,2.8 H11.5 M4.2,2.8 V1 H7.8 V2.8 M2,2.8 V12.2 H10 V2.8 M4.8,5 V10 M7.2,5 V10" fill="none" stroke="#1890ff" stroke-width="1"/></svg>
<div class="a " style="left:1791.50px;top:611.45px;font-size:14px;line-height:24px;color:#1890ff;font-weight:normal;-webkit-text-stroke:0.25px currentColor;">删除</div>
<div class="a" style="left:243px;top:703.3px;width:1639px;height:1px;background:#dfe6ec"></div>
<div class="a " style="left:261.50px;top:666.25px;font-size:15.4px;line-height:24px;color:#606266;font-weight:normal;">31</div>
<div class="a" style="left:188.30px;width:400px;text-align:center;top:666.25px;font-size:15.4px;line-height:24px;color:#606266;font-weight:normal;letter-spacing:-0.2px;">2025-08-04 22:25:28</div>
<div class="a" style="left:361.20px;width:400px;text-align:center;top:666.25px;font-size:15.4px;line-height:24px;color:#606266;font-weight:normal;-webkit-text-stroke:0.25px currentColor;">专项巡检</div>
<div class="a" style="left:543.20px;width:400px;text-align:center;top:666.25px;font-size:15.4px;line-height:24px;color:#606266;font-weight:normal;letter-spacing:-0.2px;">2025-08-05 22:25:34</div>
<div class="a" style="left:753.00px;width:400px;text-align:center;top:666.25px;font-size:15.4px;line-height:24px;color:#606266;font-weight:normal;-webkit-text-stroke:0.25px currentColor;">,刘一华,郭晶晶</div>
<div class="a" style="left:1109px;top:666.0px;width:75px;height:23px;background:#e9f7ee;border:1px solid #52d07a;border-radius:3px"></div>
<div class="a" style="left:946.50px;width:400px;text-align:center;top:666.25px;font-size:15.4px;line-height:24px;color:#1a9646;font-weight:normal;-webkit-text-stroke:0.25px currentColor;">巡检完成</div>
<div class="a" style="left:1307.30px;width:400px;text-align:center;top:666.25px;font-size:15.4px;line-height:24px;color:#606266;font-weight:normal;letter-spacing:-0.2px;">2025-08-04 22:25:48</div>
<svg class="a" style="left:1710.5px;top:671.5px;" width="14" height="11" viewBox="0 0 14 11"><path d="M0.7,5 Q7,-2.4 13.3,5 Q7,12.4 0.7,5 Z" fill="none" stroke="#1890ff" stroke-width="1"/><circle cx="7" cy="5" r="2.4" fill="none" stroke="#1890ff" stroke-width="1"/></svg>
<div class="a " style="left:1725.00px;top:665.25px;font-size:14px;line-height:24px;color:#1890ff;font-weight:normal;-webkit-text-stroke:0.25px currentColor;">详情</div>
<svg class="a" style="left:1764.5px;top:669.7px;" width="14" height="14" viewBox="0 0 14 14"><path d="M3.4,4.2 V0.6 H10.6 V4.2 M3.4,10.3 H0.6 V4.2 H13.4 V10.3 H10.6" fill="none" stroke="#1890ff" stroke-width="1.1"/><rect x="3.4" y="7.6" width="7.2" height="5.8" fill="none" stroke="#1890ff" stroke-width="1.1"/></svg>
<div class="a" style="left:243px;top:757.0999999999999px;width:1639px;height:1px;background:#dfe6ec"></div>
<div class="a " style="left:261.50px;top:720.05px;font-size:15.4px;line-height:24px;color:#606266;font-weight:normal;">29</div>
<div class="a" style="left:188.30px;width:400px;text-align:center;top:720.05px;font-size:15.4px;line-height:24px;color:#606266;font-weight:normal;letter-spacing:-0.2px;">2025-08-04 21:33:19</div>
<div class="a" style="left:361.20px;width:400px;text-align:center;top:720.05px;font-size:15.4px;line-height:24px;color:#606266;font-weight:normal;-webkit-text-stroke:0.25px currentColor;">日常巡检</div>
<div class="a" style="left:543.20px;width:400px;text-align:center;top:720.05px;font-size:15.4px;line-height:24px;color:#606266;font-weight:normal;letter-spacing:-0.2px;">2025-08-05 21:33:22</div>
<div class="a" style="left:753.00px;width:400px;text-align:center;top:720.05px;font-size:15.4px;line-height:24px;color:#606266;font-weight:normal;-webkit-text-stroke:0.25px currentColor;">,王庆国</div>
<div class="a" style="left:1109px;top:719.8px;width:75px;height:23px;background:#e9f7ee;border:1px solid #52d07a;border-radius:3px"></div>
<div class="a" style="left:946.50px;width:400px;text-align:center;top:720.05px;font-size:15.4px;line-height:24px;color:#1a9646;font-weight:normal;-webkit-text-stroke:0.25px currentColor;">巡检完成</div>
<div class="a" style="left:1307.30px;width:400px;text-align:center;top:720.05px;font-size:15.4px;line-height:24px;color:#606266;font-weight:normal;letter-spacing:-0.2px;">2025-08-04 21:33:50</div>
<svg class="a" style="left:1710.5px;top:725.3px;" width="14" height="11" viewBox="0 0 14 11"><path d="M0.7,5 Q7,-2.4 13.3,5 Q7,12.4 0.7,5 Z" fill="none" stroke="#1890ff" stroke-width="1"/><circle cx="7" cy="5" r="2.4" fill="none" stroke="#1890ff" stroke-width="1"/></svg>
<div class="a " style="left:1725.00px;top:719.05px;font-size:14px;line-height:24px;color:#1890ff;font-weight:normal;-webkit-text-stroke:0.25px currentColor;">详情</div>
<svg class="a" style="left:1764.5px;top:723.5px;" width="14" height="14" viewBox="0 0 14 14"><path d="M3.4,4.2 V0.6 H10.6 V4.2 M3.4,10.3 H0.6 V4.2 H13.4 V10.3 H10.6" fill="none" stroke="#1890ff" stroke-width="1.1"/><rect x="3.4" y="7.6" width="7.2" height="5.8" fill="none" stroke="#1890ff" stroke-width="1.1"/></svg>
<div class="a" style="left:243px;top:810.8999999999999px;width:1639px;height:1px;background:#dfe6ec"></div>
<div class="a " style="left:261.50px;top:773.85px;font-size:15.4px;line-height:24px;color:#606266;font-weight:normal;">28</div>
<div class="a" style="left:188.30px;width:400px;text-align:center;top:773.85px;font-size:15.4px;line-height:24px;color:#606266;font-weight:normal;letter-spacing:-0.2px;">2025-07-20 11:54:22</div>
<div class="a" style="left:361.20px;width:400px;text-align:center;top:773.85px;font-size:15.4px;line-height:24px;color:#606266;font-weight:normal;-webkit-text-stroke:0.25px currentColor;">日常巡检</div>
<div class="a" style="left:543.20px;width:400px;text-align:center;top:773.85px;font-size:15.4px;line-height:24px;color:#606266;font-weight:normal;letter-spacing:-0.2px;">2025-07-21 11:54:26</div>
<div class="a" style="left:753.00px;width:400px;text-align:center;top:773.85px;font-size:15.4px;line-height:24px;color:#606266;font-weight:normal;-webkit-text-stroke:0.25px currentColor;">,王华,胡吉利</div>
<div class="a" style="left:1109px;top:773.5999999999999px;width:75px;height:23px;background:#e9f7ee;border:1px solid #52d07a;border-radius:3px"></div>
<div class="a" style="left:946.50px;width:400px;text-align:center;top:773.85px;font-size:15.4px;line-height:24px;color:#1a9646;font-weight:normal;-webkit-text-stroke:0.25px currentColor;">巡检完成</div>
<div class="a" style="left:1307.30px;width:400px;text-align:center;top:773.85px;font-size:15.4px;line-height:24px;color:#606266;font-weight:normal;letter-spacing:-0.2px;">2025-07-20 11:55:07</div>
<svg class="a" style="left:1710.5px;top:779.0999999999999px;" width="14" height="11" viewBox="0 0 14 11"><path d="M0.7,5 Q7,-2.4 13.3,5 Q7,12.4 0.7,5 Z" fill="none" stroke="#1890ff" stroke-width="1"/><circle cx="7" cy="5" r="2.4" fill="none" stroke="#1890ff" stroke-width="1"/></svg>
<div class="a " style="left:1725.00px;top:772.85px;font-size:14px;line-height:24px;color:#1890ff;font-weight:normal;-webkit-text-stroke:0.25px currentColor;">详情</div>
<svg class="a" style="left:1764.5px;top:777.3px;" width="14" height="14" viewBox="0 0 14 14"><path d="M3.4,4.2 V0.6 H10.6 V4.2 M3.4,10.3 H0.6 V4.2 H13.4 V10.3 H10.6" fill="none" stroke="#1890ff" stroke-width="1.1"/><rect x="3.4" y="7.6" width="7.2" height="5.8" fill="none" stroke="#1890ff" stroke-width="1.1"/></svg>
<div class="a" style="left:243px;top:864.6999999999999px;width:1639px;height:1px;background:#dfe6ec"></div>
<div class="a " style="left:261.50px;top:827.65px;font-size:15.4px;line-height:24px;color:#606266;font-weight:normal;">27</div>
<div class="a" style="left:188.30px;width:400px;text-align:center;top:827.65px;font-size:15.4px;line-height:24px;color:#606266;font-weight:normal;letter-spacing:-0.2px;">2025-07-17 18:40:06</div>
<div class="a" style="left:361.20px;width:400px;text-align:center;top:827.65px;font-size:15.4px;line-height:24px;color:#606266;font-weight:normal;-webkit-text-stroke:0.25px currentColor;">专项巡检</div>
<div class="a" style="left:543.20px;width:400px;text-align:center;top:827.65px;font-size:15.4px;line-height:24px;color:#606266;font-weight:normal;letter-spacing:-0.2px;">2025-07-18 18:40:09</div>
<div class="a" style="left:753.00px;width:400px;text-align:center;top:827.65px;font-size:15.4px;line-height:24px;color:#606266;font-weight:normal;-webkit-text-stroke:0.25px currentColor;">,李四,王五</div>
<div class="a" style="left:1109px;top:827.4px;width:75px;height:23px;background:#e9f7ee;border:1px solid #52d07a;border-radius:3px"></div>
<div class="a" style="left:946.50px;width:400px;text-align:center;top:827.65px;font-size:15.4px;line-height:24px;color:#1a9646;font-weight:normal;-webkit-text-stroke:0.25px currentColor;">巡检完成</div>
<div class="a" style="left:1307.30px;width:400px;text-align:center;top:827.65px;font-size:15.4px;line-height:24px;color:#606266;font-weight:normal;letter-spacing:-0.2px;">2025-07-17 18:40:40</div>
<svg class="a" style="left:1710.5px;top:832.9px;" width="14" height="11" viewBox="0 0 14 11"><path d="M0.7,5 Q7,-2.4 13.3,5 Q7,12.4 0.7,5 Z" fill="none" stroke="#1890ff" stroke-width="1"/><circle cx="7" cy="5" r="2.4" fill="none" stroke="#1890ff" stroke-width="1"/></svg>
<div class="a " style="left:1725.00px;top:826.65px;font-size:14px;line-height:24px;color:#1890ff;font-weight:normal;-webkit-text-stroke:0.25px currentColor;">详情</div>
<svg class="a" style="left:1764.5px;top:831.1px;" width="14" height="14" viewBox="0 0 14 14"><path d="M3.4,4.2 V0.6 H10.6 V4.2 M3.4,10.3 H0.6 V4.2 H13.4 V10.3 H10.6" fill="none" stroke="#1890ff" stroke-width="1.1"/><rect x="3.4" y="7.6" width="7.2" height="5.8" fill="none" stroke="#1890ff" stroke-width="1.1"/></svg>
<div class="a " style="left:1331.00px;top:897.75px;font-size:14.3px;line-height:24px;color:#606266;font-weight:normal;-webkit-text-stroke:0.25px currentColor;">共 21 条</div>
<div class="a" style="left:1400px;top:895px;width:110px;height:31px;border:1px solid #dcdfe6;border-radius:3px;background:#fff"></div>
<div class="a " style="left:1420.50px;top:897.75px;font-size:14.3px;line-height:24px;color:#606266;font-weight:normal;-webkit-text-stroke:0.25px currentColor;">10条/页</div>
<svg class="a" style="left:1491px;top:906px;" width="12" height="8" viewBox="0 0 12 8"><polyline points="1,1 6,6 11,1" fill="none" stroke="#c0c4cc" stroke-width="1.2"/></svg>
<div class="a" style="left:1533px;top:895px;width:33px;height:31px;background:#f4f4f5;border-radius:2px"></div>
<div class="a" style="left:1577px;top:895px;width:33px;height:31px;background:#1890ff;border-radius:2px"></div>
<div class="a" style="left:1577.00px;width:33px;text-align:center;top:897.75px;font-size:14.3px;line-height:24px;color:#fff;font-weight:bold;">1</div>
<div class="a" style="left:1621px;top:895px;width:33px;height:31px;background:#f4f4f5;border-radius:2px"></div>
<div class="a" style="left:1621.00px;width:33px;text-align:center;top:897.75px;font-size:14.3px;line-height:24px;color:#303133;font-weight:bold;">2</div>
<div class="a" style="left:1665px;top:895px;width:33px;height:31px;background:#f4f4f5;border-radius:2px"></div>
<div class="a" style="left:1665.00px;width:33px;text-align:center;top:897.75px;font-size:14.3px;line-height:24px;color:#303133;font-weight:bold;">3</div>
<div class="a" style="left:1709px;top:895px;width:33px;height:31px;background:#f4f4f5;border-radius:2px"></div>
<svg class="a" style="left:1544px;top:903px;" width="8" height="12" viewBox="0 0 8 12"><polyline points="6,1 1.5,6 6,11" fill="none" stroke="#c0c4cc" stroke-width="1.3"/></svg>
<svg class="a" style="left:1721px;top:903px;" width="8" height="12" viewBox="0 0 8 12"><polyline points="2,1 6.5,6 2,11" fill="none" stroke="#303133" stroke-width="1.3"/></svg>
<div class="a " style="left:1774.00px;top:897.75px;font-size:14.3px;line-height:24px;color:#606266;font-weight:normal;-webkit-text-stroke:0.25px currentColor;">前往</div>
<div class="a" style="left:1808px;top:895px;width:50px;height:31px;border:1px solid #dcdfe6;border-radius:3px;background:#fff"></div>
<div class="a" style="left:1808.00px;width:50px;text-align:center;top:897.75px;font-size:14.3px;line-height:24px;color:#606266;font-weight:normal;">1</div>
<div class="a " style="left:1867.00px;top:897.75px;font-size:14.3px;line-height:24px;color:#606266;font-weight:normal;-webkit-text-stroke:0.25px currentColor;">页</div>
<div class="a" style="left:220px;top:56px;width:1px;height:857px;background:#fff"></div>
<div class="a" style="left:221px;top:1px;width:7px;height:912px;background:linear-gradient(to right,rgba(0,21,41,.22),rgba(0,21,41,0))"></div>
<div class="a" style="left:0px;top:1px;width:1920px;height:912px;background:rgba(0,0,0,.5)"></div>
<div class="a" style="left:333px;top:56px;width:1249px;height:520px;background:#fff;border-radius:3px;box-shadow:0 1px 3px rgba(0,0,0,.3)"></div>
<div class="a " style="left:356.00px;top:77.35px;font-size:19.5px;line-height:28px;color:#303133;font-weight:normal;-webkit-text-stroke:0.25px currentColor;">设备巡检计划详情</div>
<svg class="a" style="left:1545px;top:81.5px;" width="12" height="12" viewBox="0 0 12 12"><path d="M0.6,0.6 L11.4,11.4 M11.4,0.6 L0.6,11.4" stroke="#909399" stroke-width="1.2"/></svg>
<div class="a" style="left:355px;top:149px;width:147px;height:138px;background:#fafafa"></div>
<div class="a" style="left:784px;top:149px;width:146px;height:46px;background:#fafafa"></div>
<div class="a" style="left:1077px;top:149px;width:200px;height:46px;background:#fafafa"></div>
<div class="a" style="left:355px;top:149px;width:1205px;height:1px;background:#dfe6ec"></div>
<div class="a" style="left:355px;top:195px;width:1205px;height:1px;background:#dfe6ec"></div>
<div class="a" style="left:355px;top:241px;width:1205px;height:1px;background:#dfe6ec"></div>
<div class="a" style="left:355px;top:287px;width:1205px;height:1px;background:#dfe6ec"></div>
<div class="a" style="left:355px;top:149px;width:1px;height:139px;background:#dfe6ec"></div>
<div class="a" style="left:502px;top:149px;width:1px;height:139px;background:#dfe6ec"></div>
<div class="a" style="left:1559px;top:149px;width:1px;height:139px;background:#dfe6ec"></div>
<div class="a" style="left:784px;top:149px;width:1px;height:46px;background:#dfe6ec"></div>
<div class="a" style="left:930px;top:149px;width:1px;height:46px;background:#dfe6ec"></div>
<div class="a" style="left:1077px;top:149px;width:1px;height:46px;background:#dfe6ec"></div>
<div class="a" style="left:1277px;top:149px;width:1px;height:46px;background:#dfe6ec"></div>
<div class="a " style="left:367.80px;top:161.35px;font-size:15.4px;line-height:24px;color:#909399;font-weight:normal;-webkit-text-stroke:0.25px currentColor;">巡检日期</div>
<div class="a " style="left:514.30px;top:161.35px;font-size:15.4px;line-height:24px;color:#606266;font-weight:normal;letter-spacing:-0.2px;">2025-08-04 23:46:54</div>
<div class="a " style="left:796.30px;top:161.35px;font-size:15.4px;line-height:24px;color:#909399;font-weight:normal;-webkit-text-stroke:0.25px currentColor;">巡检类别</div>
<div class="a " style="left:943.30px;top:161.35px;font-size:15.4px;line-height:24px;color:#606266;font-weight:normal;-webkit-text-stroke:0.25px currentColor;">专项巡检</div>
<div class="a " style="left:1090.30px;top:161.35px;font-size:15.4px;line-height:24px;color:#909399;font-weight:normal;-webkit-text-stroke:0.25px currentColor;">计划完成时间</div>
<div class="a " style="left:1289.30px;top:161.35px;font-size:15.4px;line-height:24px;color:#606266;font-weight:normal;letter-spacing:-0.2px;">2025-08-04 23:47:05</div>
<div class="a " style="left:367.80px;top:207.55px;font-size:15.4px;line-height:24px;color:#909399;font-weight:normal;-webkit-text-stroke:0.25px currentColor;">巡检人</div>
<div class="a " style="left:514.30px;top:207.55px;font-size:15.4px;line-height:24px;color:#606266;font-weight:normal;-webkit-text-stroke:0.25px currentColor;">,张经理</div>
<div class="a " style="left:367.80px;top:253.75px;font-size:15.4px;line-height:24px;color:#909399;font-weight:normal;-webkit-text-stroke:0.25px currentColor;">备&nbsp;注</div>
<div class="a " style="left:355.50px;top:298.55px;font-size:15.4px;line-height:24px;color:#1890ff;font-weight:bold;">设备巡检计划明细</div>
<div class="a" style="left:355px;top:329.5px;width:1205px;height:2px;background:#e4e7ed"></div>
<div class="a" style="left:355px;top:329.5px;width:124px;height:2px;background:#1890ff"></div>
<div class="a" style="left:355px;top:348px;width:1205px;height:48px;background:#f8f8f9;border-bottom:1px solid #dfe6ec"></div>
<div class="a " style="left:366.50px;top:359.75px;font-size:14.4px;line-height:24px;color:#515a6e;font-weight:bold;">序号</div>
<div class="a" style="left:325.70px;width:400px;text-align:center;top:359.75px;font-size:14.4px;line-height:24px;color:#515a6e;font-weight:bold;">巡检设备</div>
<div class="a" style="left:556.00px;width:400px;text-align:center;top:359.75px;font-size:14.4px;line-height:24px;color:#515a6e;font-weight:bold;">巡检标准</div>
<div class="a" style="left:786.00px;width:400px;text-align:center;top:359.75px;font-size:14.4px;line-height:24px;color:#515a6e;font-weight:bold;">巡检项目</div>
<div class="a" style="left:1015.20px;width:400px;text-align:center;top:359.75px;font-size:14.4px;line-height:24px;color:#515a6e;font-weight:bold;">项目巡检要求</div>
<div class="a" style="left:1245.20px;width:400px;text-align:center;top:359.75px;font-size:14.4px;line-height:24px;color:#515a6e;font-weight:bold;">备注</div>
<div class="a" style="left:355px;top:468.5px;width:1205px;height:1px;background:#dfe6ec"></div>
<div class="a " style="left:367.00px;top:422.45px;font-size:15.4px;line-height:24px;color:#606266;font-weight:normal;">1</div>
<div class="a" style="left:325.70px;width:400px;text-align:center;top:422.45px;font-size:15.4px;line-height:24px;color:#606266;font-weight:normal;-webkit-text-stroke:0.25px currentColor;">缠绕机</div>
<div class="a" style="left:556.00px;width:400px;text-align:center;top:422.45px;font-size:15.4px;line-height:24px;color:#606266;font-weight:normal;-webkit-text-stroke:0.25px currentColor;">缠绕机巡检标准</div>
<div class="a" style="left:786.00px;width:400px;text-align:center;top:408.95px;font-size:15.4px;line-height:24px;color:#606266;font-weight:normal;-webkit-text-stroke:0.25px currentColor;">电源插座线是否松动</div>
<div class="a" style="left:786.00px;width:400px;text-align:center;top:435.25px;font-size:15.4px;line-height:24px;color:#606266;font-weight:normal;-webkit-text-stroke:0.25px currentColor;">齿轮机构咬合情况</div>
<div class="a" style="left:1015.20px;width:400px;text-align:center;top:408.95px;font-size:15.4px;line-height:24px;color:#606266;font-weight:normal;-webkit-text-stroke:0.25px currentColor;">电源插座线无松动</div>
<div class="a" style="left:1015.20px;width:400px;text-align:center;top:435.25px;font-size:15.4px;line-height:24px;color:#606266;font-weight:normal;-webkit-text-stroke:0.25px currentColor;">齿轮机构咬合正常</div>
<div class="a" style="left:1386px;top:514px;width:81px;height:39.5px;background:#1890ff;border-radius:4px"></div>
<div class="a" style="left:1386.00px;width:81px;text-align:center;top:521.25px;font-size:15.4px;line-height:24px;color:#fff;font-weight:bold;">确&nbsp;定</div>
<div class="a" style="left:1478.3px;top:514px;width:81px;height:39.5px;border:1px solid #dcdfe6;border-radius:4px;background:#fff"></div>
<div class="a" style="left:1478.30px;width:81px;text-align:center;top:521.25px;font-size:15.4px;line-height:24px;color:#606266;font-weight:normal;-webkit-text-stroke:0.25px currentColor;">取&nbsp;消</div>
<svg class="a" style="left:0;top:0" width="1920" height="914" viewBox="0 0 1920 914"><defs><filter id="sh" x="-20%" y="-20%" width="140%" height="140%"><feDropShadow dx="3" dy="3" stdDeviation="3" flood-color="#000" flood-opacity=".55"/></filter></defs><g filter="url(#sh)" fill="#ff0000"><polygon points="1496,497 1591,519.5 1562.3,532.5 1555.5,544 1554.5,575.5"/><line x1="1559" y1="538" x2="1679.5" y2="617.4" stroke="#ff0000" stroke-width="14" stroke-linecap="round"/></g></svg>
<div class="a" style="left:0px;top:0px;width:1920px;height:1px;background:#eef0ee"></div>
<div class="a" style="left:0px;top:913px;width:1920px;height:1px;background:#e9f3f6"></div>
</body></html>
